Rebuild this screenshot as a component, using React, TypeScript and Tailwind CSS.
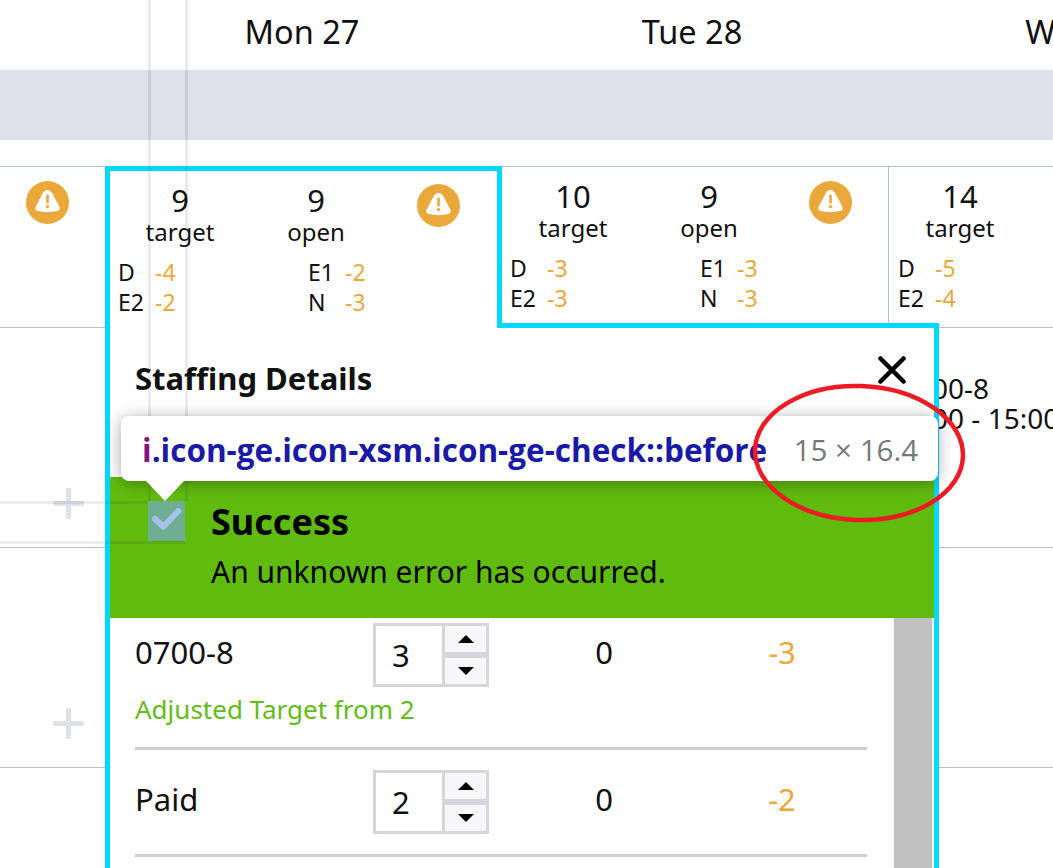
const sans = "font-['Noto_Sans','Liberation_Sans',sans-serif]";

const Warn = ({ className }: { className: string }) => (
  <svg viewBox="0 0 43 43" className={`h-[43px] w-[43px] shrink-0 ${className}`}>
    <circle cx="21.5" cy="21.5" r="21.5" fill="#eba83a" />
    <path
      d="M21.5 9C24 9 25.5 10.5 27 13.5L33 25C34.5 28 33.5 29.5 31 30C25 31.5 18 31.5 12 30C9.5 29.5 8.5 28 10 25L16 13.5C17.5 10.5 19 9 21.5 9Z"
      fill="#fff"
    />
    <rect x="20.2" y="13.5" width="2.6" height="9" rx="1" fill="#eba83a" />
    <circle cx="21.5" cy="25.6" r="1.7" fill="#eba83a" />
  </svg>
);

const Plus = () => (
  <svg viewBox="0 0 31 31" className="h-[31px] w-[31px]">
    <path d="M15.5 2V29M2 15.5H29" stroke="#dde3e9" strokeWidth="5" strokeLinecap="round" />
  </svg>
);

const Summary = ({ value, label }: { value: string; label: string }) => (
  <div className="w-[136px] text-center text-[#111]">
    <div className="text-[31px] leading-[34px]">{value}</div>
    <div className="mt-px text-[24px] leading-[28px]">{label}</div>
  </div>
);

const Stat = ({ label, value }: { label: string; value: string }) => (
  <div className="flex h-[30px] items-center text-[23px] leading-[30px]">
    <span className="w-[37px] text-[#111]">{label}</span>
    <span className="text-[#eba83a]">{value}</span>
  </div>
);

const Stepper = ({ value }: { value: string }) => (
  <div className="flex h-[64px] w-[116px] shrink-0 border-[3px] border-[#d5d5dc] bg-[#d5d5dc]">
    <div className="flex w-[66px] items-center bg-white pl-[16px] text-[31px] text-[#111]">{value}</div>
    <div className="ml-[3px] flex flex-1 flex-col gap-[6px]">
      <div className="flex h-[26px] items-center justify-center bg-[#f7f7fa]">
        <svg viewBox="0 0 16 8" className="h-[8px] w-[16px]">
          <path d="M8 0L16 8H0Z" fill="#000" />
        </svg>
      </div>
      <div className="flex h-[26px] items-center justify-center bg-[#f7f7fa]">
        <svg viewBox="0 0 16 8" className="h-[8px] w-[16px]">
          <path d="M0 0H16L8 8Z" fill="#000" />
        </svg>
      </div>
    </div>
  </div>
);

const StaffRow = ({ name, target, open, diff }: { name: string; target: string; open: string; diff: string }) => (
  <div className="flex items-start">
    <div className="flex h-[58px] w-[238px] items-center text-[31px] text-[#111]">{name}</div>
    <Stepper value={target} />
    <div className="flex h-[58px] w-[230px] items-center justify-center text-[31px] text-[#111]">{open}</div>
    <div className="flex h-[58px] w-[126px] items-center justify-center text-[31px] text-[#eba83a]">{diff}</div>
  </div>
);

export default function App() {
  return (
    <div className={`relative h-[868px] w-[1053px] overflow-hidden bg-white ${sans}`}>
      {/* Day header */}
      <div className="flex h-[70px] items-center text-[32.5px] text-[#111]">
        <div className="w-[107px] shrink-0" />
        <div className="w-[390px] shrink-0 pb-[6px] text-center">Mon 27</div>
        <div className="w-[390px] shrink-0 pb-[6px] text-center">Tue 28</div>
        <div className="w-[390px] shrink-0 pb-[6px] text-center">Wed 29</div>
      </div>
      <div className="h-[70px] bg-[#dce2e8]" />
      <div className="h-[26px]" />

      {/* Totals row */}
      <div className="flex h-[162px] border-y border-[#b0c0cc]">
        <div className="w-[105px] shrink-0 pl-[26px] pt-[14px]">
          <Warn className="" />
        </div>
        <div className="relative z-10 -mt-px h-[162px] w-[397px] shrink-0 border-[5px] border-b-0 border-[#00d8ff] bg-white">
          <div className="flex pl-[2px] pt-[12px]">
            <Summary value="9" label="target" />
            <Summary value="9" label="open" />
            <Warn className="ml-[33px] mt-[1px]" />
          </div>
          <div className="mt-[11px] grid grid-cols-[190px_1fr] pl-[8px]">
            <Stat label="D" value="-4" />
            <Stat label="E1" value="-2" />
            <Stat label="E2" value="-2" />
            <Stat label="N" value="-3" />
          </div>
        </div>
        <div className="w-[386px] shrink-0">
          <div className="flex pl-[3px] pt-[12px]">
            <Summary value="10" label="target" />
            <Summary value="9" label="open" />
            <Warn className="ml-[32px] mt-[2px]" />
          </div>
          <div className="mt-[11px] grid grid-cols-[190px_1fr] pl-[8px]">
            <Stat label="D" value="-3" />
            <Stat label="E1" value="-3" />
            <Stat label="E2" value="-3" />
            <Stat label="N" value="-3" />
          </div>
        </div>
        <div className="flex-1 border-l border-[#b0c0cc]">
          <div className="flex pl-[3px] pt-[12px]">
            <Summary value="14" label="target" />
          </div>
          <div className="mt-[11px] pl-[9px]">
            <Stat label="D" value="-5" />
            <Stat label="E2" value="-4" />
          </div>
        </div>
      </div>

      {/* Shift rows */}
      <div className="flex h-[220px] border-b border-[#b0c0cc]">
        <div className="w-[105px] shrink-0 pl-[53px] pt-[160px]">
          <Plus />
        </div>
        <div className="w-[783px] shrink-0" />
        <div className="flex-1 whitespace-nowrap pl-[12px] pt-[45px] text-[28px] leading-[30px] text-[#111]">
          <div>0700-8</div>
          <div>0700 - 15:00</div>
        </div>
      </div>
      <div className="flex h-[220px] border-b border-[#b0c0cc]">
        <div className="w-[105px] shrink-0 pl-[53px] pt-[160px]">
          <Plus />
        </div>
      </div>

      {/* Staffing details popover */}
      <div className="absolute left-[105px] top-[323px] z-[5] flex h-[560px] w-[834px] flex-col border-[5px] border-b-0 border-[#00d8ff] bg-white">
        <div className="flex h-[149px] shrink-0 items-start justify-between pl-[25px] pr-[28px] pt-[34px]">
          <div className="text-[31px] font-bold leading-[32px] text-[#111]">Staffing Details</div>
          <svg viewBox="0 0 28 28" className="mt-[-6px] h-[28px] w-[28px]">
            <path d="M2.5 2.5L25.5 25.5M25.5 2.5L2.5 25.5" stroke="#000" strokeWidth="4.5" strokeLinecap="round" />
          </svg>
        </div>
        <div className="h-[141px] shrink-0 bg-[#60bb0f] pl-[101px] pt-[25px] text-black">
          <div className="text-[36px] font-bold leading-[40px]">Success</div>
          <div className="mt-[10px] text-[30px] leading-[40px]">An unknown error has occurred.</div>
        </div>
        <div className="flex flex-1">
          <div className="w-[783px] shrink-0 pl-[25px] pr-[26px]">
            <div className="border-b-[3px] border-[#cfcfd8] pb-[22px] pt-[5px]">
              <StaffRow name="0700-8" target="3" open="0" diff="-3" />
              <div className="mt-[6px] text-[26px] leading-[32px] text-[#62bb17]">Adjusted Target from 2</div>
            </div>
            <div className="border-b-[3px] border-[#cfcfd8] pb-[20px] pt-[20px]">
              <StaffRow name="Paid" target="2" open="0" diff="-2" />
            </div>
          </div>
          <div className="w-[41px] border-l border-r-2 border-[#f1f1f1] bg-[#c1c1c1]" />
        </div>
      </div>

      {/* Inspector guides and highlighted element */}
      <div className="absolute left-[148px] top-0 z-[15] h-[501px] w-[3px] bg-black/[0.08]" />
      <div className="absolute left-[185px] top-0 z-[15] h-[501px] w-[3px] bg-black/[0.08]" />
      <div className="absolute left-0 top-[501px] z-[15] h-[3px] w-[148px] bg-black/[0.08]" />
      <div className="absolute left-0 top-[541px] z-[15] h-[3px] w-[185px] bg-black/[0.08]" />
      <svg viewBox="0 0 37 40" className="absolute left-[148px] top-[501px] z-[15] h-[40px] w-[37px]">
        <rect width="37" height="40" fill="#6fae93" />
        <path d="M7 18L15.3 25.7L30.3 10" fill="none" stroke="#a3c3ea" strokeWidth="6" strokeLinecap="round" strokeLinejoin="round" />
      </svg>

      {/* Inspector tooltip */}
      <div className="absolute left-[121px] top-[416px] z-20 flex h-[65px] w-[817px] items-center justify-between rounded-lg bg-white pl-[21px] pr-[20px] pt-[2px] shadow-[0_2px_16px_rgba(0,0,0,0.35)] font-['Open_Sans',sans-serif]">
        <div className="whitespace-nowrap text-[31.5px] font-bold text-[#1a1aa6]">
          <span className="text-[#881280]">i</span>.icon-ge.icon-xsm.icon-ge-check::before
        </div>
        <div className="whitespace-nowrap pt-[2px] text-[29.5px] text-[#777]">15 × 16.4</div>
      </div>
      <div className="absolute left-[146px] top-[481px] z-20 h-0 w-0 border-x-[19px] border-t-[20px] border-x-transparent border-t-white" />

      {/* Red annotation */}
      <svg viewBox="0 0 1053 868" className="pointer-events-none absolute inset-0 z-30 h-[868px] w-[1053px]">
        <ellipse cx="859" cy="453" rx="104" ry="67" fill="none" stroke="#ed1c24" strokeWidth="4.5" transform="rotate(2 859 453)" />
      </svg>
    </div>
  );
}
